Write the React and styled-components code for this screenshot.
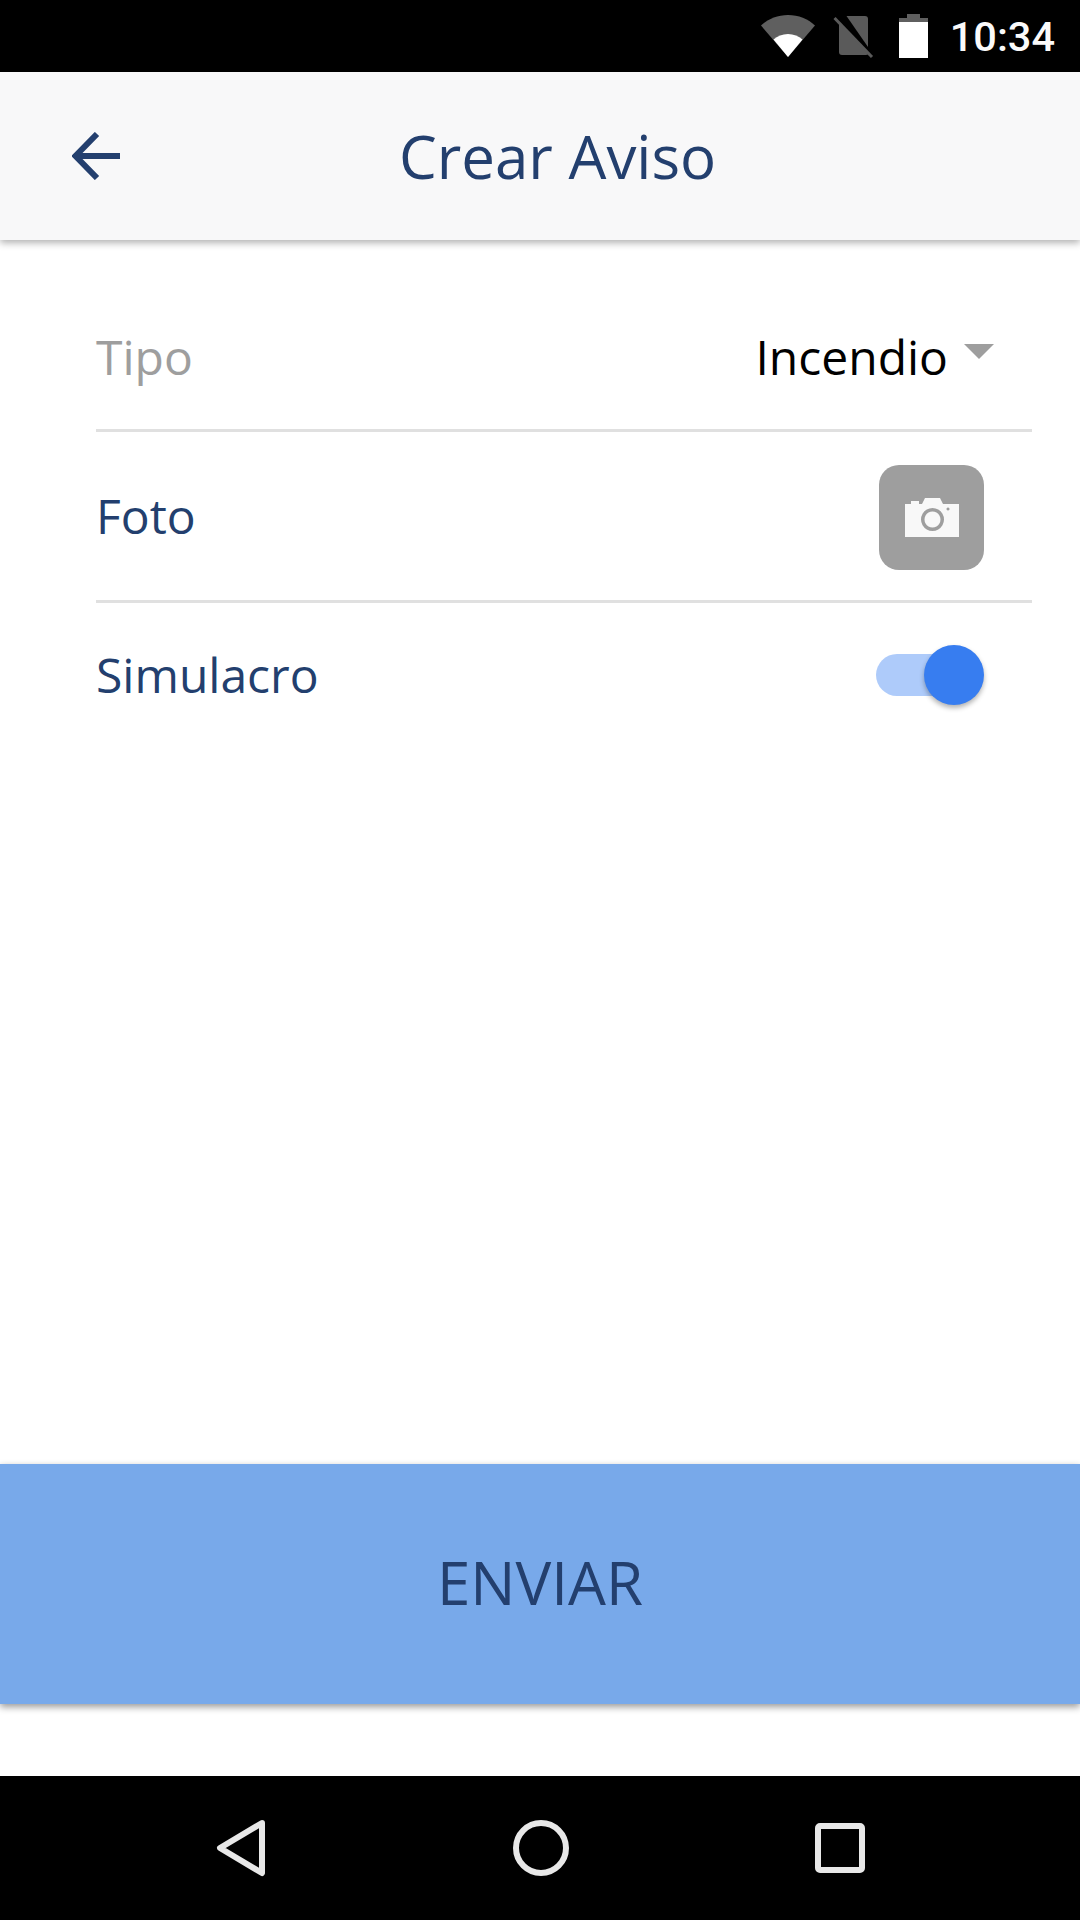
import styled, { createGlobalStyle } from 'styled-components';

const GlobalStyle = createGlobalStyle`
  html, body {
    margin: 0;
    padding: 0;
    background: #fff;
  }
  * {
    box-sizing: border-box;
  }
`;

export default function App() {
  return (
    <>
      <GlobalStyle />
      <Page>
        <StatusBar>
          <svg width="54" height="42" viewBox="0 0 54 42" style={{ marginRight: 18 }}>
            <path d="M0 10.5C7 4 16.5 0 27 0s20 4 27 10.500L27 42z" fill="#5f5f5f" />
            <path d="M12.500 24.500C16.300 21.200 21.400 19 27 19s10.700 2.200 14.500 5.500L27 42z" fill="#fff" />
          </svg>
          <svg width="41" height="44" viewBox="0 0 41 44" style={{ marginRight: 25 }}>
            <path d="M6 8.500V38a3 3 0 0 0 3 3h24a3 3 0 0 0 2-.8z" fill="#5a5a5a" />
            <path d="M13.500 2H32a3 3 0 0 1 3 3v28z" fill="#5a5a5a" />
            <path d="M1.500 4L39 43" stroke="#5a5a5a" strokeWidth="3" />
          </svg>
          <svg width="29" height="44" viewBox="0 0 29 44" style={{ marginRight: 22 }}>
            <path d="M8 0h13v4h8v4H0V4h8z" fill="#5f5f5f" />
            <rect y="8" width="29" height="36" fill="#fff" />
          </svg>
          <Clock>10:34</Clock>
        </StatusBar>

        <Header>
          <BackButton>
            <svg width="48" height="48" viewBox="0 0 48 48" fill="none">
              <path d="M25 2L3.500 24 25 46M3.500 24H48" stroke="#233f6e" strokeWidth="6" />
            </svg>
          </BackButton>
          <Title>Crear Aviso</Title>
        </Header>

        <Form>
          <Row $height={147} $border>
            <Label $muted>Tipo</Label>
            <Select>
              <SelectValue>Incendio</SelectValue>
              <Caret />
            </Select>
          </Row>
          <Row $height={171} $border>
            <Label>Foto</Label>
            <PhotoButton>
              <svg width="58" height="44" viewBox="0 0 58 44">
                <path
                  fillRule="evenodd"
                  d="M2 9h6V6h8v3h3l3-6h15l3 6h16v33H2zM29.500 13a11.500 11.500 0 1 0 .01 0zM29.500 16.500a8 8 0 1 1-.01 0zM45 12.500a1.500 1.500 0 1 0 .01 0z"
                  fill="#f8f8f8"
                />
              </svg>
            </PhotoButton>
          </Row>
          <Row $height={144}>
            <Label>Simulacro</Label>
            <Toggle>
              <Knob />
            </Toggle>
          </Row>
        </Form>

        <SubmitButton>ENVIAR</SubmitButton>

        <NavBar>
          <svg width="50" height="58" viewBox="0 0 50 58" fill="none">
            <path d="M46 4L4 29l42 25z" stroke="#e8e8e8" strokeWidth="6" strokeLinejoin="round" />
          </svg>
          <svg width="56" height="56" viewBox="0 0 56 56" fill="none">
            <circle cx="28" cy="28" r="25" stroke="#e8e8e8" strokeWidth="6" />
          </svg>
          <svg width="50" height="50" viewBox="0 0 50 50" fill="none">
            <rect x="3" y="3" width="44" height="44" rx="2" stroke="#e8e8e8" strokeWidth="6" />
          </svg>
        </NavBar>
      </Page>
    </>
  );
}

const Page = styled.div`
  display: flex;
  flex-direction: column;
  width: 1080px;
  height: 1920px;
  overflow: hidden;
  background: #fff;
  font-family: 'Open Sans', sans-serif;
`;

const StatusBar = styled.div`
  display: flex;
  align-items: center;
  justify-content: flex-end;
  height: 72px;
  padding-right: 25px;
  background: #000;
`;

const Clock = styled.span`
  font-family: Roboto, sans-serif;
  font-size: 41.500px;
  font-weight: 500;
  color: #fafafa;
`;

const Header = styled.header`
  position: relative;
  z-index: 1;
  display: flex;
  align-items: center;
  height: 168px;
  padding-left: 72px;
  background: #f8f8f9;
  box-shadow: 0 3px 7px rgba(0, 0, 0, 0.3);
`;

const BackButton = styled.div`
  display: flex;
`;

const Title = styled.h1`
  margin: 0 0 0 279px;
  font-size: 60px;
  font-weight: 400;
  color: #233f6e;
`;

const Form = styled.div`
  flex: 1;
  padding: 45px 48px 0 96px;
`;

const Row = styled.div`
  display: flex;
  align-items: center;
  justify-content: space-between;
  height: ${(p) => p.$height}px;
  border-bottom: ${(p) => (p.$border ? '3px solid #e0e0e0' : 'none')};
`;

const Label = styled.span`
  margin-top: -2px;
  font-size: 48px;
  color: ${(p) => (p.$muted ? '#9e9e9e' : '#233f6e')};
`;

const Select = styled.div`
  display: flex;
  align-items: center;
  margin-right: 38px;
`;

const SelectValue = styled.span`
  margin-top: -2px;
  font-size: 48px;
  color: #000;
`;

const Caret = styled.span`
  width: 0;
  height: 0;
  margin: -12px 0 0 16px;
  border-left: 15px solid transparent;
  border-right: 15px solid transparent;
  border-top: 15px solid #9e9e9e;
`;

const PhotoButton = styled.div`
  display: flex;
  align-items: center;
  justify-content: center;
  width: 105px;
  height: 105px;
  margin: 2px 48px 0 0;
  border-radius: 20px;
  background: #9e9e9e;
`;

const Toggle = styled.div`
  position: relative;
  width: 97px;
  height: 42px;
  margin-right: 59px;
  border-radius: 21px;
  background: #aecbfa;
`;

const Knob = styled.span`
  position: absolute;
  top: -9px;
  right: -11px;
  width: 60px;
  height: 60px;
  border-radius: 50%;
  background: #377df0;
  box-shadow: 0 3px 5px rgba(0, 0, 0, 0.3);
`;

const SubmitButton = styled.button`
  flex: none;
  height: 240px;
  margin-bottom: 72px;
  padding: 0 0 4px;
  border: none;
  background: #78a9ea;
  box-shadow: 0 3px 7px rgba(0, 0, 0, 0.4);
  font-family: inherit;
  font-size: 60px;
  color: #233f6e;
`;

const NavBar = styled.nav`
  display: flex;
  align-items: center;
  height: 144px;
  padding-left: 216px;
  gap: 246.500px;
  background: #000;
`;
